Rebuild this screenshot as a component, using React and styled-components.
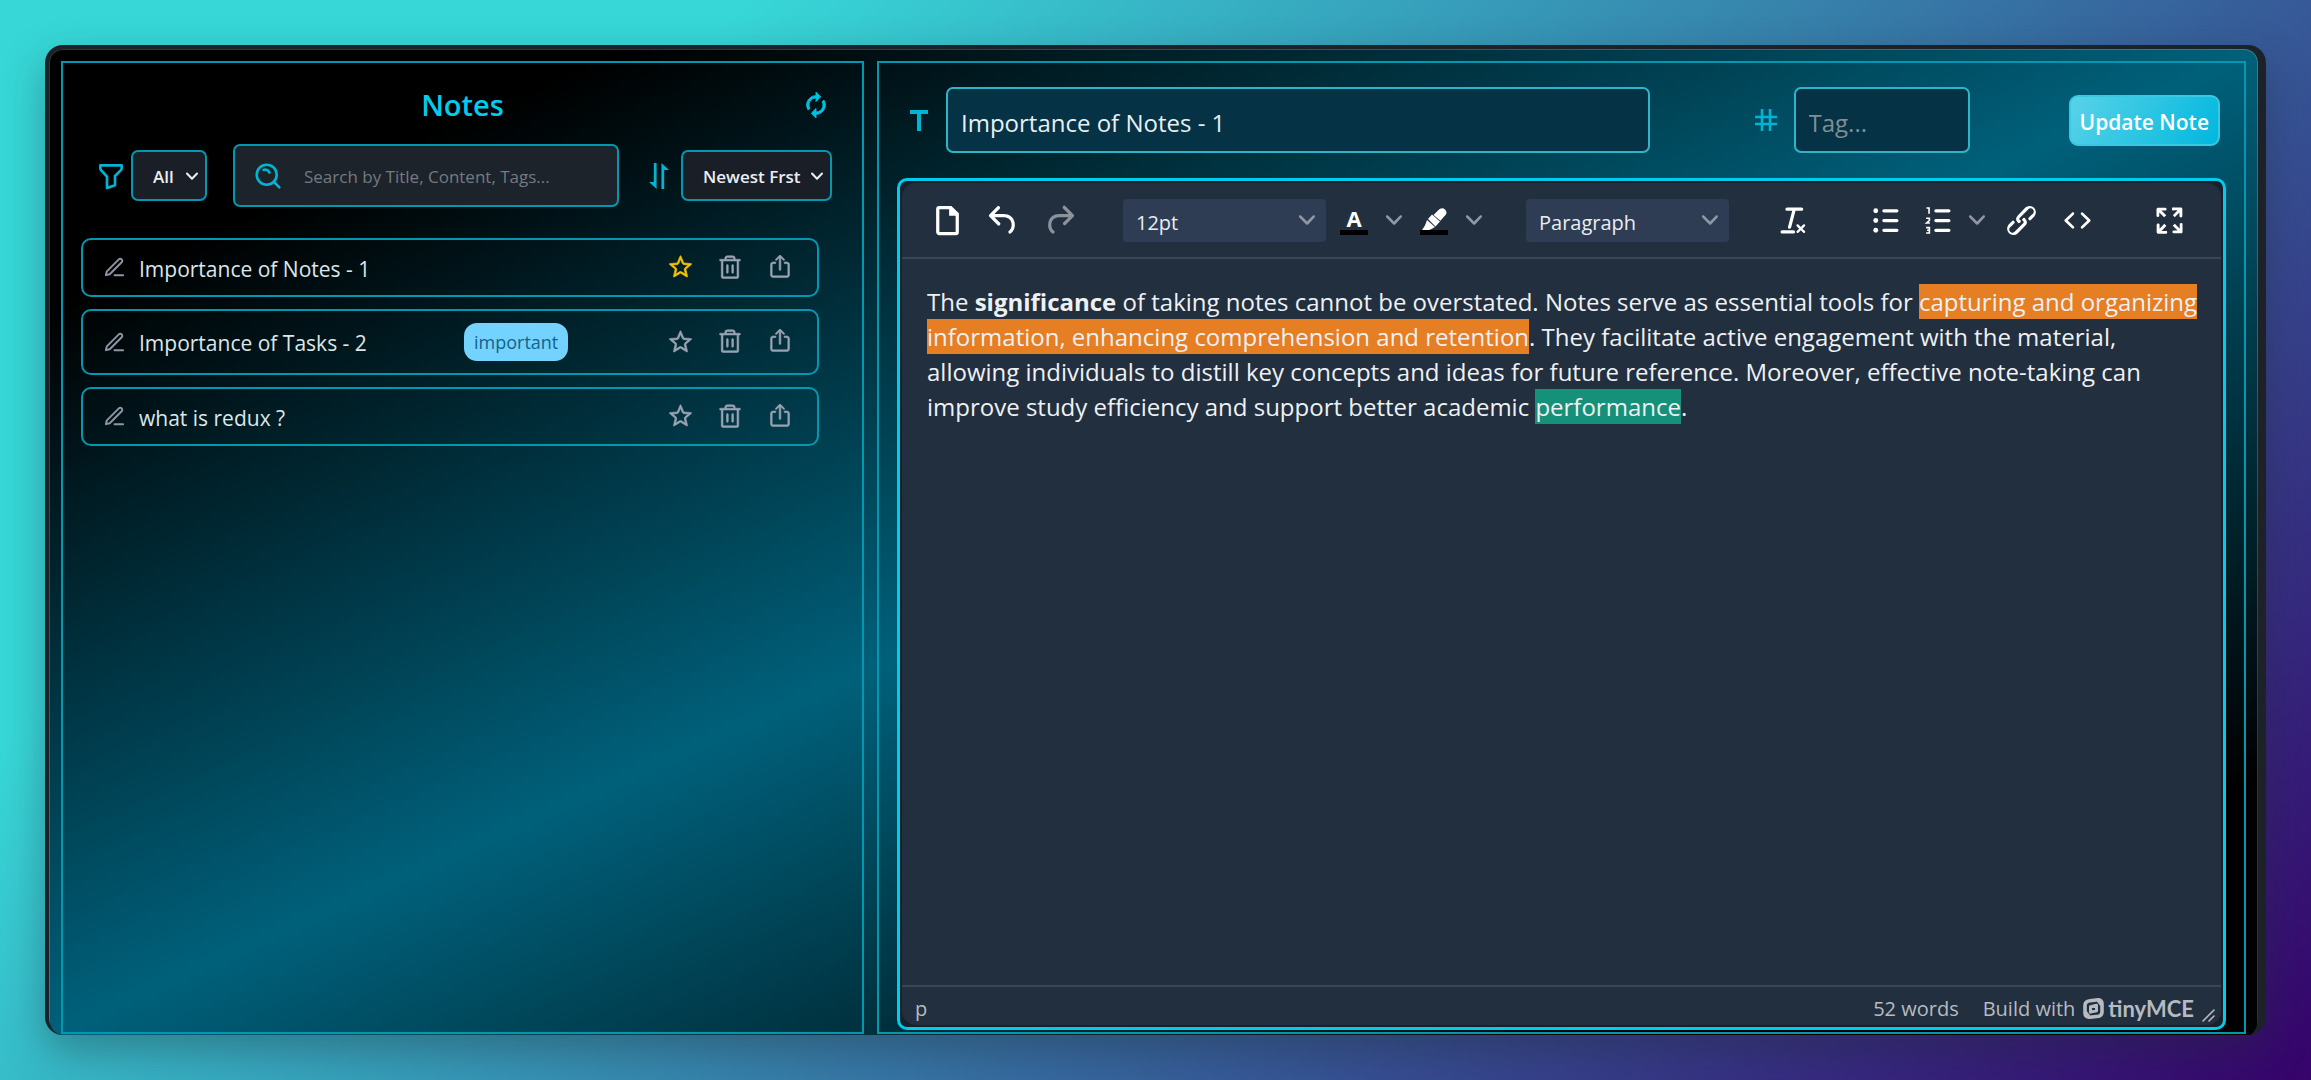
import React from "react";
import styled, { createGlobalStyle } from "styled-components";
import { MdAutorenew } from "react-icons/md";
import { TbFilter } from "react-icons/tb";
import { FiEdit3 } from "react-icons/fi";
import { RxStar, RxShare2 } from "react-icons/rx";
import { PiTrash } from "react-icons/pi";

const cyan = "#00b4d3";
const line = "#0299b0";
const editorBg = "#222f3e";

const GlobalStyle = createGlobalStyle`
  *, *::before, *::after { box-sizing: border-box; }
  body {
    margin: 0;
    font-family: "Open Sans", "Noto Sans", sans-serif;
    color: #e6edf2;
  }
  button, input, select { font: inherit; color: inherit; margin: 0; }
  svg { display: block; flex: none; }
`;

/* ---------- page frame ---------- */

const Page = styled.div`
  min-height: 100vh;
  padding: 45px;
  display: flex;
  background: linear-gradient(135deg, #37d7d7 22%, #36036b 100%);
`;

const Frame = styled.div`
  flex: 1;
  display: flex;
  border: solid #1c2228;
  border-width: 4px 8px 0 4px;
  border-radius: 18px;
  overflow: hidden;
  box-shadow: 0 16px 40px rgba(30, 40, 50, 0.36);
  background: #1c2228;
`;

const Screen = styled.main`
  flex: 1;
  display: grid;
  grid-template-columns: minmax(0, 803fr) minmax(0, 1369fr);
  gap: 13px;
  padding: 11px 11px 1px;
  border: 1px solid rgba(255, 255, 255, 0.2);
  border-bottom: 0;
  border-radius: 14px 14px 0 0;
  background: linear-gradient(156deg, #000 13%, #00607a 50%, #000 87%);
  background-origin: border-box;
`;

const Panel = styled.section`
  display: flex;
  flex-direction: column;
  min-width: 0;
  border: 2px solid ${line};
`;

/* ---------- notes list ---------- */

const ListPanel = styled(Panel)`
  padding: 21px 18px;
`;

const TitleRow = styled.header`
  display: grid;
  grid-template-columns: 28px 1fr 28px;
  align-items: center;
  padding: 0 14px 0 14px;
  margin-bottom: 18px;
`;

const Heading = styled.h1`
  grid-column: 2;
  margin: 0;
  font-size: 29px;
  line-height: 42px;
  font-weight: 600;
  text-align: center;
  color: #00cdec;
`;

const IconButton = styled.button`
  display: flex;
  align-items: center;
  justify-content: center;
  width: ${(p) => p.$w || 28}px;
  height: ${(p) => p.$h || 32}px;
  padding: 0;
  border: 0;
  background: none;
  color: ${(p) => p.$color || "#9aa3b2"};
  cursor: pointer;
  &:disabled { color: #8b929b; cursor: default; }
`;

const RefreshIcon = styled(MdAutorenew)`
  path:not([fill="none"]) {
    stroke: currentColor;
    stroke-width: 0.8px;
  }
`;

const StarIcon = styled(RxStar)`
  stroke: currentColor;
  stroke-width: 0.4px;
`;

const TrashIcon = styled(PiTrash)`
  stroke: currentColor;
  stroke-width: 5px;
`;

const ShareIcon = styled(RxShare2)`
  stroke: currentColor;
  stroke-width: 0.3px;
`;

const Filters = styled.div`
  display: flex;
  align-items: center;
  padding: 0 12px 0 14px;
  margin-bottom: 31px;
  color: ${cyan};
`;

const FilterGroup = styled.div`
  display: flex;
  align-items: center;
  gap: ${(p) => p.$gap}px;
`;

const SelectBox = styled.span`
  display: grid;
  align-items: center;
  width: ${(p) => p.$w}px;
  color: #e9eef2;
  > * { grid-area: 1 / 1; }
  > svg {
    justify-self: end;
    margin-right: ${(p) => p.$arrow}px;
    pointer-events: none;
  }
`;

const DarkSelect = styled.select`
  appearance: none;
  width: 100%;
  height: 51px;
  padding: 2px 0 0 20px;
  border: 2px solid ${line};
  border-radius: 7px;
  background: #1a1e27;
  font-size: 17px;
  font-weight: 600;
`;

const SearchBox = styled.label`
  flex: 1;
  min-width: 0;
  display: flex;
  align-items: center;
  gap: 23px;
  height: 63px;
  margin: 0 30px 0 26px;
  padding: 0 20px;
  border: 2px solid ${line};
  border-radius: 7px;
  background: #1d232a;
`;

const SearchInput = styled.input`
  flex: 1;
  min-width: 0;
  padding: 2px 0 0;
  border: 0;
  outline: 0;
  background: none;
  font-size: 17px;
  color: #e6edf2;
  &::placeholder { color: #747a81; opacity: 1; }
`;

const Notes = styled.ul`
  display: flex;
  flex-direction: column;
  gap: 12px;
  margin: 0 25px 0 0;
  padding: 0;
  list-style: none;
`;

const Note = styled.li`
  display: flex;
  align-items: center;
  min-height: 59px;
  padding: 12px 23px 12px 20px;
  border: 2px solid ${line};
  border-radius: 10px;
  color: #9195a3;
`;

const NoteTitle = styled.h2`
  width: 325px;
  margin: 0 0 0 13px;
  padding-top: 2px;
  font-size: 21px;
  line-height: 28px;
  font-weight: 400;
  color: #dde6ea;
`;

const Tag = styled.span`
  padding: 0 10px;
  border-radius: 13px;
  background: #74d3fe;
  color: #12628a;
  font-size: 18px;
  line-height: 38px;
`;

const Actions = styled.div`
  display: flex;
  gap: 22px;
  margin-left: auto;
`;

/* ---------- note form ---------- */

const EditPanel = styled(Panel)`
  padding: 24px 18px 2px;
`;

const Form = styled.form`
  display: flex;
  align-items: center;
  padding: 0 6px 0 12px;
  margin-bottom: 25px;
  color: ${cyan};
`;

const Field = styled.label`
  display: flex;
  align-items: center;
  justify-content: flex-end;
  flex: ${(p) => p.$flex};
  gap: 17px;
  min-width: 0;
`;

const TextInput = styled.input`
  flex: ${(p) => (p.$w ? "none" : 1)};
  min-width: 0;
  width: ${(p) => (p.$w ? `${p.$w}px` : "auto")};
  height: 66px;
  padding: 4px 13px 0;
  border: 2px solid #2fb5c8;
  border-radius: 7px;
  outline: 0;
  background: #053244;
  font-size: 24px;
  color: #e8eff3;
  &::placeholder { color: #7e8f97; opacity: 1; }
`;

const SubmitButton = styled.button`
  height: 51px;
  margin-left: 99px;
  padding: 4px 9px 0;
  border: 2px solid #38c8e2;
  border-radius: 9px;
  background: linear-gradient(120deg, #5ad3e8, #00b7de) border-box;
  color: #fff;
  font-size: 21px;
  font-weight: 600;
  white-space: nowrap;
`;

/* ---------- rich text editor ---------- */

const Editor = styled.div`
  flex: 1;
  display: flex;
  border: 3px solid #00cdec;
  border-radius: 10px;
  background: #17202b;
`;

const EditorInner = styled.div`
  flex: 1;
  display: flex;
  flex-direction: column;
  min-width: 0;
  margin: 2px;
  border-radius: 14px;
  background: ${editorBg};
`;

const Toolbar = styled.div`
  display: flex;
  flex-wrap: wrap;
  align-items: center;
  gap: 0 36px;
  min-height: 76px;
  padding: 0 17px;
  border-bottom: 2px solid #3a4654;
  color: #fff;
`;

const Group = styled.div`
  display: flex;
  align-items: center;
`;

const ToolSelect = styled.select`
  appearance: none;
  width: 100%;
  height: 43px;
  padding: 5px 0 0 13px;
  border: 0;
  border-radius: 4px;
  background: #2e3d53;
  font-size: 20px;
`;

const Split = styled.div`
  display: flex;
  margin-left: ${(p) => (p.$space ? 4 : 0)}px;
`;

const Swatch = styled.span`
  display: flex;
  flex-direction: column;
  align-items: center;
  justify-content: flex-end;
  width: 28px;
  height: 29px;
  border-bottom: 5px solid #000;
  font-size: 22px;
  line-height: 24px;
  font-weight: 700;
`;

const Content = styled.div`
  flex: 1;
  padding: 25px 20px 25px 25px;
  font-size: 24px;
  line-height: 35px;
  color: #eef1f4;
  p { margin: 0; }
`;

const Mark = styled.mark`
  padding: 1px 0;
  background: ${(p) => p.$bg};
  color: inherit;
`;

const StatusBar = styled.footer`
  display: flex;
  align-items: center;
  gap: 24px;
  height: 40px;
  padding: 5px 6px 0 13px;
  border-top: 2px solid #3a4654;
  font-size: 20px;
  line-height: 30px;
  color: #b6bbc1;
`;

const Path = styled.span`
  flex: 1;
`;

const Brand = styled.a`
  display: flex;
  align-items: center;
  gap: 8px;
  color: inherit;
  text-decoration: none;
`;

const BrandName = styled.span`
  display: flex;
  align-items: center;
  gap: 4px;
  font-family: Lato, "Open Sans", sans-serif;
  font-size: 22px;
  line-height: 26px;
  font-weight: 700;
`;

const Grip = styled.span`
  align-self: flex-end;
  margin-left: -16px;
  padding-bottom: 3px;
`;

/* ---------- drawings ---------- */

const Chevron = () => (
  <svg width="12" height="12" viewBox="0 0 12 12" fill="none" stroke="currentColor" strokeWidth="2" strokeLinecap="round" strokeLinejoin="round">
    <path d="M1 3.5 6 8.8l5-5.3" />
  </svg>
);

const ToolChevron = () => (
  <svg width="16" height="16" viewBox="0 0 10 10" fill="#8e97a3">
    <path d="M8.7 2.2c.3-.3.8-.3 1 0 .4.4.4.9 0 1.2L5.7 7.8c-.3.3-.9.3-1.2 0L.2 3.4a.8.8 0 0 1 0-1.2c.3-.3.8-.3 1.1 0L5 6l3.7-3.8Z" />
  </svg>
);

const SearchIcon = () => (
  <svg width="26" height="26" viewBox="0 0 26 26" fill="none" stroke="currentColor" strokeWidth="2.6" strokeLinecap="round">
    <circle cx="11.7" cy="11.7" r="10" />
    <path d="m19 19 5.3 5.3M8.6 7c2.2-1 4.9.1 5.8 2.5" />
  </svg>
);

const SortIcon = () => (
  <svg width="20" height="26" viewBox="0 0 20 26" fill="currentColor">
    <path d="M4.8 0h2.8v26L0 19h4.8ZM12.4 26h2.8V7H20L12.4 0Z" />
  </svg>
);

const TitleIcon = () => (
  <svg width="20" height="26" viewBox="0 0 20 26" fill="currentColor">
    <path d="M1 3h18v4H12v17H8V7H1Z" />
  </svg>
);

const HashIcon = () => (
  <svg width="22" height="26" viewBox="0 0 22 26" fill="none" stroke="currentColor" strokeWidth="2.6">
    <path d="M0 10h22M0 17h22M7 2v22M15 2v22" />
  </svg>
);

const toolPaths = {
  doc: "M14.4 3H7a2 2 0 0 0-2 2v14c0 1.1.9 2 2 2h10a2 2 0 0 0 2-2V7.6L14.4 3ZM17 19H7V5h6v4h4v10Z",
  undo: "M6.4 8H12c3.7 0 6.2 2 6.8 5.1.6 2.7-.4 5.6-2.3 6.8a1 1 0 0 1-1-1.8c1.1-.6 1.8-2.7 1.4-4.6-.5-2.1-2.1-3.5-4.9-3.5H6.4l3.3 3.3a1 1 0 1 1-1.4 1.4l-5-5a1 1 0 0 1 0-1.4l5-5a1 1 0 0 1 1.4 1.4L6.4 8Z",
  redo: "M17.6 10H12c-2.8 0-4.4 1.4-4.9 3.5-.4 2 .3 4 1.4 4.6a1 1 0 1 1-1 1.8c-2-1.2-2.9-4.1-2.3-6.8.6-3 3-5.1 6.8-5.1h5.6l-3.3-3.3a1 1 0 1 1 1.4-1.4l5 5a1 1 0 0 1 0 1.4l-5 5a1 1 0 0 1-1.4-1.4l3.3-3.3Z",
  clear: "M13.2 6a1 1 0 0 1 0 .2l-2.6 10a1 1 0 0 1-1 .8h-.2a.8.8 0 0 1-.8-1l2.6-10H8a1 1 0 1 1 0-2h9a1 1 0 0 1 0 2h-3.8ZM5 18h7a1 1 0 0 1 0 2H5a1 1 0 0 1 0-2Zm13 1.5L16.5 18 15 19.5a.7.7 0 0 1-1-1l1.5-1.5-1.5-1.5a.7.7 0 0 1 1-1l1.5 1.5 1.5-1.5a.7.7 0 0 1 1 1L17.5 17l1.5 1.5a.7.7 0 0 1-1 1Z",
  link: "M6.2 12.3a1 1 0 0 1 1.4 1.4l-2 2a2 2 0 1 0 2.6 2.8l4.8-4.8a1 1 0 0 0 0-1.4 1 1 0 1 1 1.4-1.3 2.9 2.9 0 0 1 0 4L9.6 20a3.9 3.9 0 0 1-5.5-5.5l2-2Zm11.6-.6a1 1 0 0 1-1.4-1.4l2-2a2 2 0 1 0-2.6-2.8L11 10.3a1 1 0 0 0 0 1.4A1 1 0 1 1 9.6 13a2.9 2.9 0 0 1 0-4L14.4 4a3.9 3.9 0 0 1 5.5 5.5l-2 2Z",
  code: "M9.8 15.7c.3.3.3.8 0 1-.3.4-.9.4-1.2 0l-4.4-4.1a.8.8 0 0 1 0-1.2l4.4-4.2c.3-.3.9-.3 1.2 0 .3.3.3.8 0 1.1L6 12l3.8 3.7ZM14.2 15.7c-.3.3-.3.8 0 1 .4.4.9.4 1.2 0l4.4-4.1c.3-.3.3-.9 0-1.2l-4.4-4.2a.8.8 0 0 0-1.2 0c-.3.3-.3.8 0 1.1L18 12l-3.8 3.7Z",
  full: "m15.3 10-1.2-1.3 2.9-3h-2.3a.9.9 0 1 1 0-1.7H19c.5 0 .9.4.9.9v4.4a.9.9 0 1 1-1.8 0V7l-2.9 3Zm0 4 3 3v-2.3a.9.9 0 1 1 1.7 0V19c0 .5-.4.9-.9.9h-4.4a.9.9 0 1 1 0-1.8H17l-3-2.9 1.3-1.2ZM10 15.4l-2.9 3h2.3a.9.9 0 1 1 0 1.7H5a.9.9 0 0 1-.9-.9v-4.4a.9.9 0 1 1 1.8 0V17l2.9-3 1.2 1.3ZM8.7 10l-3-3v2.3a.9.9 0 0 1-1.7 0V5c0-.5.4-.9.9-.9h4.4a.9.9 0 0 1 0 1.8H7l3 2.9L8.7 10Z",
};

const ToolIcon = ({ name, children }) => (
  <svg width="39" height="39" viewBox="0 0 24 24" fill="currentColor">
    {name ? <path d={toolPaths[name]} /> : children}
  </svg>
);

const listBars = <path d="M11 5h8a1 1 0 0 1 0 2h-8a1 1 0 0 1 0-2Zm0 6h8a1 1 0 0 1 0 2h-8a1 1 0 0 1 0-2Zm0 6h8a1 1 0 0 1 0 2h-8a1 1 0 0 1 0-2Z" />;

const BulletIcon = () => (
  <ToolIcon>
    {listBars}
    <circle cx="6" cy="6" r="1.5" />
    <circle cx="6" cy="12" r="1.5" />
    <circle cx="6" cy="18" r="1.5" />
  </ToolIcon>
);

const NumberedIcon = () => (
  <ToolIcon>
    {listBars}
    <path d="M5.2 4.3h1.6v3.5M5 10.6h2V12l-1.7 1.5h2M5 16.4h2V18H5.6 7v1.7H5" fill="none" stroke="currentColor" strokeWidth="1" />
  </ToolIcon>
);

const PenIcon = () => (
  <svg width="28" height="22" viewBox="0 0 28 22" fill="currentColor">
    <path d="M2 22c3-4 4-7 5-10l8 7c-2 1-3 2-6 3Z" />
    <path d="m8 11 4-4.5 8 7-4.500 5Z" />
    <path d="m13.500 7 4.500-4.500c2.500-2.500 5-2.800 7-1s2 4.500-.5 6.500L20.500 12.800Z" />
  </svg>
);

const BrandMark = () => (
  <svg width="21" height="21" viewBox="0 0 21 21" fill="none" stroke="currentColor" strokeLinejoin="round">
    <path d="M7 2.8 15 1.8c2.5-.2 4 1.4 4 3.700v8.500c0 2.400-1.200 3.800-3.500 4.200l-8.500 1c-3 .2-5-1.200-5-3.700V7.500c0-2.700 1.800-4.300 5-4.700Z" strokeWidth="3.6" />
    <path d="M7.500 8.600 13.500 7.200v5.500L7.500 14.100Z" strokeWidth="3" />
    <path d="M15 2.500 18.500 7M2.500 14 6 18.500" strokeWidth="3" />
  </svg>
);

const GripIcon = () => (
  <svg width="13" height="13" viewBox="0 0 13 13" fill="none" stroke="currentColor" strokeWidth="1.6" strokeLinecap="round">
    <path d="M1 12 12 1M7 12l5-5" />
  </svg>
);

/* ---------- data and app ---------- */

const notes = [
  { title: "Importance of Notes - 1", starred: true },
  { title: "Importance of Tasks - 2", tag: "important" },
  { title: "what is redux ?" },
];

const Tool = ({ label, name, disabled, width = 56, children }) => (
  <IconButton type="button" aria-label={label} disabled={disabled} $w={width} $h={46} $color="#fff">
    {name ? <ToolIcon name={name} /> : children}
  </IconButton>
);

const SplitTool = ({ label, space, children }) => (
  <Split $space={space}>
    <Tool label={label} width={48}>{children}</Tool>
    <Tool label={`${label} options`} width={32}><ToolChevron /></Tool>
  </Split>
);

function NotesList() {
  return (
    <ListPanel>
      <TitleRow>
        <Heading>Notes</Heading>
        <IconButton type="button" aria-label="Refresh" $color="#00c2e2"><RefreshIcon size={28} /></IconButton>
      </TitleRow>
      <Filters>
        <FilterGroup $gap={4}>
          <TbFilter size={32} />
          <SelectBox $w={76} $arrow={9}>
            <DarkSelect aria-label="Filter notes"><option>All</option></DarkSelect>
            <Chevron />
          </SelectBox>
        </FilterGroup>
        <SearchBox>
          <SearchIcon />
          <SearchInput type="text" aria-label="Search notes" placeholder="Search by Title, Content, Tags..." />
        </SearchBox>
        <FilterGroup $gap={12}>
          <SortIcon />
          <SelectBox $w={151} $arrow={9}>
            <DarkSelect aria-label="Sort notes"><option>Newest Frst</option></DarkSelect>
            <Chevron />
          </SelectBox>
        </FilterGroup>
      </Filters>
      <Notes>
        {notes.map((note) => (
          <Note key={note.title}>
            <FiEdit3 size={23} />
            <NoteTitle>{note.title}</NoteTitle>
            {note.tag && <Tag>{note.tag}</Tag>}
            <Actions>
              <IconButton type="button" aria-label="Star" $h={28} $color={note.starred && "#f5c400"}><StarIcon size={25} /></IconButton>
              <IconButton type="button" aria-label="Delete" $h={28}><TrashIcon size={28} /></IconButton>
              <IconButton type="button" aria-label="Share" $h={28}><ShareIcon size={26} /></IconButton>
            </Actions>
          </Note>
        ))}
      </Notes>
    </ListPanel>
  );
}

function NoteEditor() {
  return (
    <EditPanel>
      <Form onSubmit={(e) => e.preventDefault()}>
        <Field $flex="0 1 741px">
          <TitleIcon />
          <TextInput type="text" aria-label="Title" defaultValue="Importance of Notes - 1" />
        </Field>
        <Field $flex="1 0 auto">
          <HashIcon />
          <TextInput type="text" aria-label="Tag" placeholder="Tag..." $w={176} />
        </Field>
        <SubmitButton type="submit">Update Note</SubmitButton>
      </Form>
      <Editor>
        <EditorInner>
          <Toolbar role="toolbar" aria-label="Formatting">
            <Group>
              <Tool label="New document" name="doc" />
              <Tool label="Undo" name="undo" />
              <Tool label="Redo" name="redo" disabled />
            </Group>
            <Group>
              <SelectBox $w={203} $arrow={11}>
                <ToolSelect aria-label="Font size"><option>12pt</option></ToolSelect>
                <ToolChevron />
              </SelectBox>
              <SplitTool label="Text color" space><Swatch>A</Swatch></SplitTool>
              <SplitTool label="Highlight color"><Swatch><PenIcon /></Swatch></SplitTool>
            </Group>
            <SelectBox $w={203} $arrow={11}>
              <ToolSelect aria-label="Block format"><option>Paragraph</option></ToolSelect>
              <ToolChevron />
            </SelectBox>
            <Tool label="Clear formatting" name="clear" />
            <Group>
              <Tool label="Bullet list"><BulletIcon /></Tool>
              <SplitTool label="Numbered list"><NumberedIcon /></SplitTool>
              <Tool label="Link" name="link" />
              <Tool label="Source code" name="code" />
            </Group>
            <Tool label="Fullscreen" name="full" />
          </Toolbar>
          <Content>
            <p>
              The <b>significance</b> of taking notes cannot be overstated. Notes serve as essential tools for{" "}
              <Mark $bg="#e67e23">capturing and organizing information, enhancing comprehension and retention</Mark>. They
              facilitate active engagement with the material, allowing individuals to distill key concepts and ideas for
              future reference. Moreover, effective note-taking can improve study efficiency and support better academic{" "}
              <Mark $bg="#169179">performance</Mark>.
            </p>
          </Content>
          <StatusBar>
            <Path>p</Path>
            <span>52 words</span>
            <Brand href="#tinymce">
              Build with
              <BrandName><BrandMark />tinyMCE</BrandName>
            </Brand>
            <Grip><GripIcon /></Grip>
          </StatusBar>
        </EditorInner>
      </Editor>
    </EditPanel>
  );
}

export default function App() {
  return (
    <>
      <GlobalStyle />
      <Page>
        <Frame>
          <Screen>
            <NotesList />
            <NoteEditor />
          </Screen>
        </Frame>
      </Page>
    </>
  );
}
